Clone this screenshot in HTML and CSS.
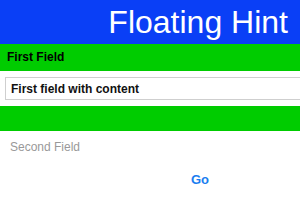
FILE: index.html
```html
<!DOCTYPE html>
<html lang="en">
<head>
    <meta charset="UTF-8">
    <title>Floating Hint</title>
    <link rel="stylesheet" href="styles.css">
</head>
<body>
    <div class="header">Floating Hint</div>
    <div class="label-bar">First Field</div>
    <div class="field-row">
        <input class="text-field" type="text" value="First field with content">
    </div>
    <div class="spacer-bar"></div>
    <div class="hint-field">Second Field</div>
    <div class="actions">
        <button class="go-btn">Go</button>
    </div>
</body>
</html>
```
FILE: styles.css
```css
html, body {
    margin: 0;
    padding: 0;
    overflow: hidden;
    background: #fff;
    font-family: 'Liberation Sans', Arial, sans-serif;
}
.header {
    height: 44px;
    line-height: 44px;
    background-color: #0a3ff6;
    color: #fff;
    font-size: 32px;
    text-align: right;
    padding-right: 12px;
}
.label-bar {
    height: 27px;
    line-height: 27px;
    background-color: #00cc00;
    padding-left: 7px;
    font-size: 12px;
    font-weight: bold;
    color: #000;
}
.field-row {
    padding: 6px 0 6px 5px;
}
.text-field {
    box-sizing: border-box;
    display: block;
    width: 100%;
    height: 23px;
    margin: 0;
    padding: 0 5px;
    border: 1px solid #cfcfcf;
    border-right: none;
    outline: none;
    font-family: 'Liberation Sans', Arial, sans-serif;
    font-size: 12px;
    font-weight: bold;
    color: #111;
}
.spacer-bar {
    height: 25px;
    background-color: #00cc00;
}
.hint-field {
    padding: 9px 0 0 10px;
    height: 22px;
    line-height: 14px;
    font-size: 12px;
    color: #999;
}
.actions {
    padding-left: 191px;
}
.go-btn {
    border: none;
    background: none;
    padding: 0;
    margin-top: 10px;
    font-family: 'Liberation Sans', Arial, sans-serif;
    font-size: 13px;
    font-weight: bold;
    color: #1a7ef0;
    cursor: pointer;
}
```
